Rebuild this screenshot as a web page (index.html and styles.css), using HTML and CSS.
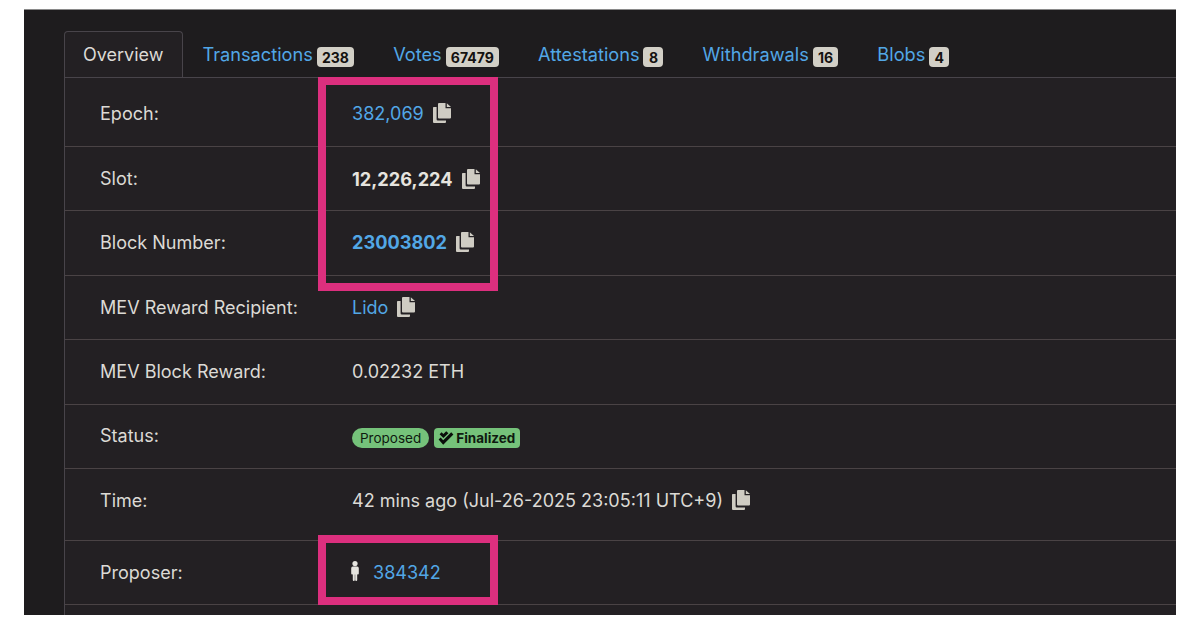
FILE: index.html
```html
<!DOCTYPE html>
<html lang="en">
<head>
<meta charset="utf-8">
<title>Slot 12,226,224</title>
<link rel="stylesheet" href="styles.css">
</head>
<body>
<svg class="defs" width="0" height="0" aria-hidden="true">
  <symbol id="copy" viewBox="0 0 18 20">
    <path d="M6 0h6.5v5.2H18V14.6a1 1 0 0 1-1 1H6a1 1 0 0 1-1-1V1a1 1 0 0 1 1-1z"/>
    <path d="M13.8 0.2 18 4h-4.2z"/>
    <path d="M0.8 4H3.6V16.2A1.2 1.2 0 0 0 4.8 17.4H13V19a1 1 0 0 1-1 1H1a1 1 0 0 1-1-1V4.8A.8.8 0 0 1 .8 4z"/>
  </symbol>
</svg>
<main class="panel">
  <nav class="tabs">
    <a class="tab active">Overview</a>
    <a class="tab">Transactions <span class="count">238</span></a>
    <a class="tab">Votes <span class="count">67479</span></a>
    <a class="tab">Attestations <span class="count">8</span></a>
    <a class="tab">Withdrawals <span class="count">16</span></a>
    <a class="tab">Blobs <span class="count">4</span></a>
  </nav>
  <section class="details">
    <div class="row first"><div class="label">Epoch:</div><div class="value"><a class="link">382,069</a><svg class="copy"><use href="#copy"/></svg></div></div>
    <div class="row"><div class="label">Slot:</div><div class="value"><strong>12,226,224</strong><svg class="copy"><use href="#copy"/></svg></div></div>
    <div class="row up"><div class="label">Block Number:</div><div class="value"><a class="link bold">23003802</a><svg class="copy"><use href="#copy"/></svg></div></div>
    <div class="row"><div class="label">MEV Reward Recipient:</div><div class="value"><a class="link">Lido</a><svg class="copy"><use href="#copy"/></svg></div></div>
    <div class="row"><div class="label">MEV Block Reward:</div><div class="value">0.02232 ETH</div></div>
    <div class="row up"><div class="label">Status:</div><div class="value badges">
      <span class="pill">Proposed</span>
      <span class="final"><svg class="check" viewBox="0 0 16 14"><path d="M.6 8.6 2.6 6.6l2.6 2.6 8-8L15.4 3.4 5.2 13.8z"/><path d="M1.6 3.2 3.6 1.2 5.4 3 8.2 .2 10.4 2.2 5.4 7z"/></svg>Finalized</span>
    </div></div>
    <div class="row tall"><div class="label">Time:</div><div class="value">42 mins ago (Jul-26-2025 23:05:11 UTC+9)<svg class="copy"><use href="#copy"/></svg></div></div>
    <div class="row"><div class="label">Proposer:</div><div class="value"><svg class="person" viewBox="0 0 8 20"><circle cx="4" cy="2.6" r="2.6"/><path d="M1.8 5.6h4.4A1.6 1.6 0 0 1 7.8 7.2v5.4a1 1 0 0 1-1.6.6V19a1 1 0 0 1-2 0v-5.4h-.4V19a1 1 0 0 1-2 0v-5.8a1 1 0 0 1-1.6-.6V7.2a1.6 1.6 0 0 1 1.6-1.6z"/></svg><a class="link">384342</a></div></div>
  </section>
  <div class="mark mark-top"></div>
  <div class="mark mark-bottom"></div>
</main>
</body>
</html>
```
FILE: styles.css
```css
* { box-sizing: border-box; }
html, body { margin: 0; height: 630px; overflow: hidden; background: #fff; }
body { padding: 9px 24px 15px; font-family: Inter, "Liberation Sans", sans-serif; font-size: 18.05px; color: #dcdad5; }
.defs { position: absolute; }
.panel { position: relative; height: 606px; padding: 21px 0 0 40px; background: #1e1c1e; border-top: 1px solid #8a8a8a; overflow: hidden; }
.tabs { display: flex; height: 47px; border-bottom: 1px solid #48444a; font-size: 18.2px; }
.tab { display: block; height: 46px; padding: 12px 20px 0 19px; color: #52a7e6; white-space: nowrap; }
.tab.active { color: #dcdad5; background: #232023; border: 1px solid #48444a; border-bottom: 0; border-radius: 4px 4px 0 0; padding: 12px 19px 0 18px; font-size: 18px; }
.count { display: inline-block; min-width: 20px; height: 20px; padding: 0 5.3px; margin-left: -1.3px; border-radius: 4px; background: #d2cfc6; color: #141210; font-size: 14px; font-weight: 700; line-height: 21px; text-align: center; vertical-align: -2px; }
.details { height: 100%; background: #232023; border-left: 1px solid #48444a; }
.row { display: flex; align-items: center; height: 64.4px; padding-left: 35px; border-bottom: 1px solid #4a4345; }
.first { height: 69px; padding-top: 2px; }
.up { padding-bottom: 2px; }
.tall { height: 72px; padding-bottom: 8px; }
.label { width: 252px; flex: none; }
.value { display: flex; align-items: center; }
.link { color: #52a7e6; }
.bold, strong { font-weight: 700; font-size: 18.2px; }
strong { color: #e6e4df; }
.copy { width: 18px; height: 20px; margin-left: 9px; fill: #cfccc3; }
.badges { gap: 5px; margin-top: 6px; }
.pill, .final { height: 20px; background: #75c27a; color: #0f1a10; font-size: 13.5px; line-height: 20px; }
.pill { padding: 0 8px; border-radius: 10px; }
.final { display: flex; align-items: center; padding: 0 5px 0 4px; border-radius: 4px; font-weight: 700; }
.check { width: 16px; height: 14px; margin-right: 2px; fill: #0a0f0a; }
.person { width: 8px; height: 20px; margin: -3px 14px 0 -1px; fill: #e6e4df; }
.mark { position: absolute; left: 294px; width: 180px; border: 8px solid #dc2f7e; }
.mark-top { top: 67px; height: 214px; }
.mark-bottom { top: 525px; height: 70px; }
```
